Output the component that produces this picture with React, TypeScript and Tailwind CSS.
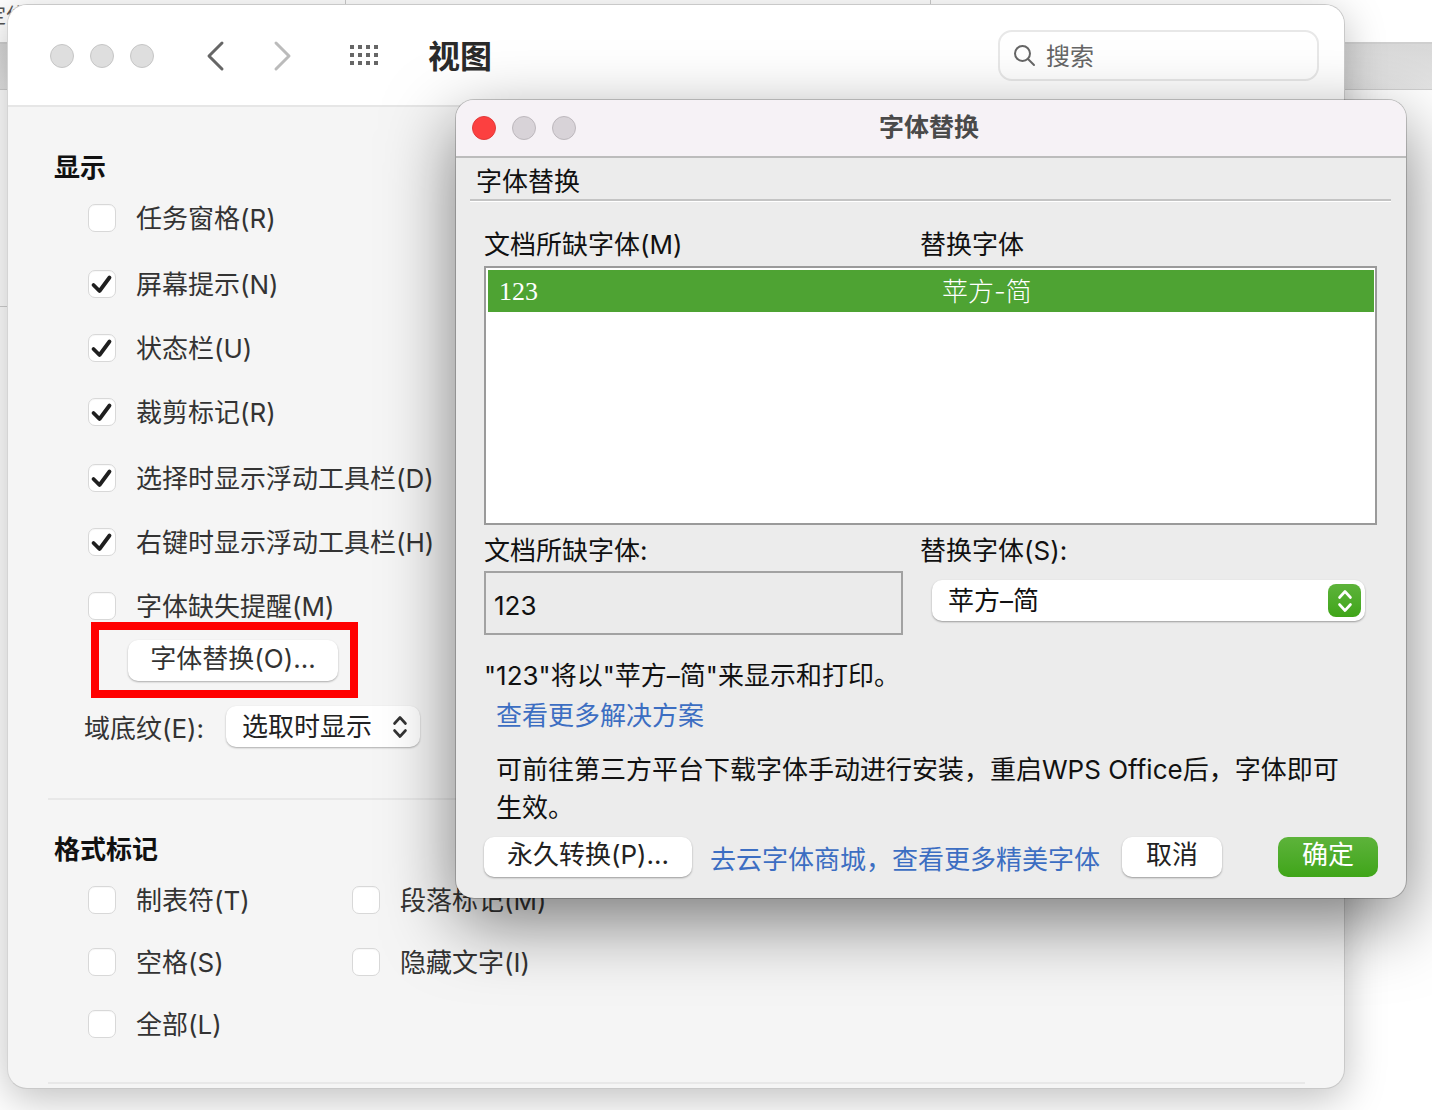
const font = "font-['Inter','Noto_Sans_CJK_SC','Liberation_Sans',sans-serif]"

function Checkbox({ checked }: { checked?: boolean }) {
  return (
    <div className="flex items-center justify-center w-[28px] h-[28px] mt-[2px] shrink-0 rounded-[7px] bg-white border border-[#d8d8d8] shadow-[inset_0_1px_1px_rgba(0,0,0,0.03)]">
      {checked && (
        <svg width="26" height="26" viewBox="0 0 26 26" fill="none" stroke="#1f1f1f" strokeWidth="3.8" strokeLinecap="round" strokeLinejoin="round">
          <path d="M4.5 14 10.5 20 20.5 6.5" />
        </svg>
      )}
    </div>
  )
}

function Option({ label, checked, className }: { label: string; checked?: boolean; className?: string }) {
  return (
    <div className={`flex items-center h-[28px] ${className || ''}`}>
      <Checkbox checked={checked} />
      <span className="ml-[20px] mt-[4px] text-[26px] leading-[28px] text-[#333] whitespace-nowrap">{label}</span>
    </div>
  )
}

function Updown({ className }: { className?: string }) {
  return (
    <svg width="16" height="26" viewBox="0 0 16 26" fill="none" stroke="currentColor" strokeWidth="2.6" strokeLinecap="round" strokeLinejoin="round" className={className}>
      <path d="M2.5 9.5 8 3.5l5.5 6" />
      <path d="M2.5 16.5 8 22.5l5.5-6" />
    </svg>
  )
}

function Dots() {
  return (
    <div className="grid grid-cols-4 gap-x-[4px] gap-y-[4px] ml-[58px]">
      {Array.from({ length: 12 }).map((_, i) => (
        <div key={i} className="w-[4px] h-[4px] bg-[#666]" />
      ))}
    </div>
  )
}

function MainWindow() {
  return (
    <div className="absolute left-[7px] top-[4px] w-[1338px] h-[1085px] rounded-[20px] overflow-hidden bg-[#f5f5f5] border border-[#c9c9c9] border-l-[#d4d4d4] shadow-[0_10px_40px_rgba(0,0,0,0.25)]">
      <div className="flex items-center h-[102px] bg-white border-b-2 border-[#e6e6e6] pl-[42px]">
        <div className="flex gap-[16px] mt-[2px]">
          <div className="w-[24px] h-[24px] rounded-full bg-[#dedede] border border-[#c6c6c6]" />
          <div className="w-[24px] h-[24px] rounded-full bg-[#dedede] border border-[#c6c6c6]" />
          <div className="w-[24px] h-[24px] rounded-full bg-[#dedede] border border-[#c6c6c6]" />
        </div>
        <svg width="20" height="32" viewBox="0 0 20 32" fill="none" strokeWidth="3" strokeLinecap="round" strokeLinejoin="round" className="ml-[52px] mt-[2px] stroke-[#666]">
          <path d="M16 3 3 16l13 13" />
        </svg>
        <svg width="20" height="32" viewBox="0 0 20 32" fill="none" strokeWidth="3" strokeLinecap="round" strokeLinejoin="round" className="ml-[46px] mt-[2px] stroke-[#bbb]">
          <path d="M4 3l13 13L4 29" />
        </svg>
        <Dots />
        <div className="ml-[50px] pt-[4px] text-[32px] leading-[40px] font-bold text-[#2b2b2b]">视图</div>
        <div className="flex items-center ml-[506px] w-[321px] h-[51px] rounded-[14px] border-2 border-[#e8e8e8] bg-white pl-[12px]">
          <svg width="24" height="24" viewBox="0 0 24 24" fill="none" stroke="#666" strokeWidth="2" strokeLinecap="round">
            <circle cx="10.5" cy="10.5" r="7.5" />
            <path d="m16 16 6 6" />
          </svg>
          <span className="ml-[10px] pt-[4px] text-[24px] leading-[30px] text-[#666]">搜索</span>
        </div>
      </div>

      <div className="pt-[46px]">
        <div className="ml-[46px] text-[26px] leading-[30px] font-bold text-[#111]">显示</div>
        <div className="pl-[80px] pt-[20px]">
          <Option label="任务窗格(R)" />
          <Option label="屏幕提示(N)" checked className="mt-[38px]" />
          <Option label="状态栏(U)" checked className="mt-[36px]" />
          <Option label="裁剪标记(R)" checked className="mt-[36px]" />
          <Option label="选择时显示浮动工具栏(D)" checked className="mt-[38px]" />
          <Option label="右键时显示浮动工具栏(H)" checked className="mt-[36px]" />
          <Option label="字体缺失提醒(M)" className="mt-[36px]" />
        </div>
        <div className="flex items-center ml-[83px] mt-[3px] w-[267px] h-[76px] border-[8px] border-[#ff0000] pl-[29px]">
          <div className="flex items-center justify-center w-[210px] h-[41px] pb-[4px] rounded-[10px] bg-white text-[26px] text-[#333] shadow-[0_1px_2px_rgba(0,0,0,0.3)]">
            字体替换(O)...
          </div>
        </div>
        <div className="flex items-center ml-[76px] mt-[8px] h-[41px]">
          <span className="pt-[4px] text-[26px] leading-[30px] text-[#333]">域底纹(E):</span>
          <div className="flex items-center justify-between ml-[22px] w-[194px] h-[41px] rounded-[10px] bg-white pl-[16px] pr-[12px] text-[26px] text-[#222] shadow-[0_1px_2px_rgba(0,0,0,0.3)]">
            选取时显示
            <Updown className="text-[#333]" />
          </div>
        </div>
        <div className="ml-[40px] mr-[39px] mt-[51px] h-[2px] bg-[#e8e8e8]" />
        <div className="ml-[46px] mt-[35px] text-[26px] leading-[30px] font-bold text-[#111]">格式标记</div>
        <div className="pl-[80px] pt-[20px]">
          <div className="flex gap-[236px]">
            <div className="w-[28px]"><Option label="制表符(T)" /></div>
            <Option label="段落标记(M)" />
          </div>
          <div className="flex gap-[236px] mt-[34px]">
            <div className="w-[28px]"><Option label="空格(S)" /></div>
            <Option label="隐藏文字(I)" />
          </div>
          <Option label="全部(L)" className="mt-[34px]" />
        </div>
        <div className="ml-[40px] w-[1257px] mt-[45px] h-[2px] bg-[#e8e8e8]" />
      </div>
    </div>
  )
}

function FontDialog() {
  return (
    <div className="absolute left-[456px] top-[100px] w-[950px] h-[798px] rounded-[18px] overflow-hidden bg-[#ececec] ring-1 ring-black/20 shadow-[0_24px_70px_rgba(0,0,0,0.5)]">
      <div className="relative flex items-center h-[58px] bg-[#f6f2f6] border-b-2 border-[#bcbcbc] pl-[16px] gap-[16px]">
        <div className="w-[24px] h-[24px] rounded-full bg-[#fc4040] border border-[#e03a3a]" />
        <div className="w-[24px] h-[24px] rounded-full bg-[#d8d3d8] border border-[#bdb8bd]" />
        <div className="w-[24px] h-[24px] rounded-full bg-[#d8d3d8] border border-[#bdb8bd]" />
        <div className="absolute left-0 right-[4px] bottom-[13px] text-center text-[25px] leading-[32px] font-bold text-[#4a4a4a]">字体替换</div>
      </div>

      <div className="ml-[20px] mt-[8px] text-[26px] leading-[32px] text-[#111]">字体替换</div>
      <div className="ml-[14px] w-[921px] mt-[1px] h-[2px] bg-[#c4c4c4]" />
      <div className="ml-[14px] w-[921px] h-[1px] bg-white" />

      <div className="flex ml-[28px] mt-[27px] text-[26px] leading-[32px] text-[#111]">
        <div className="w-[436px]">文档所缺字体(M)</div>
        <div>替换字体</div>
      </div>

      <div className="ml-[28px] mt-[5px] w-[893px] h-[259px] border-2 border-[#9a9a9a] bg-white px-[2px] pt-[2px]">
        <div className="flex items-center w-[886px] h-[42px] bg-[#4ea333] text-white text-[26px]">
          <span className="ml-[11px] w-[443px] font-['Liberation_Serif',serif]">123</span>
          <span className="font-light">苹方-简</span>
        </div>
      </div>

      <div className="flex ml-[28px] mt-[10px] text-[26px] leading-[32px] text-[#111]">
        <div className="w-[436px]">文档所缺字体:</div>
        <div>替换字体(S):</div>
      </div>

      <div className="flex ml-[28px] mt-[4px]">
        <div className="flex items-center w-[419px] h-[64px] border-2 border-[#a2a2a2] bg-[#ebebeb] pl-[8px] pt-[4px] text-[26px] text-[#111]">123</div>
        <div className="flex items-center justify-between ml-[29px] mt-[9px] w-[433px] h-[41px] rounded-[10px] bg-white pl-[16px] pr-[4px] text-[26px] text-[#111] shadow-[0_1px_2px_rgba(0,0,0,0.35)]">
          <span>苹方–简</span>
          <div className="flex items-center justify-center w-[33px] h-[33px] rounded-[8px] bg-gradient-to-b from-[#5db33a] to-[#3fa517]">
            <Updown className="text-white" />
          </div>
        </div>
      </div>

      <div className="ml-[28px] mt-[24px] text-[26px] leading-[34px] text-[#111]">"123"将以"苹方–简"来显示和打印。</div>
      <div className="ml-[40px] mt-[6px] text-[26px] leading-[34px] text-[#3c6ec2]">查看更多解决方案</div>
      <div className="ml-[40px] mt-[18px] text-[26px] leading-[38px] text-[#111] whitespace-nowrap">
        可前往第三方平台下载字体手动进行安装，重启WPS Office后，字体即可
        <br />
        生效。
      </div>

      <div className="flex items-center ml-[28px] mt-[10px] h-[40px]">
        <div className="flex items-center justify-center w-[208px] h-[40px] pb-[6px] rounded-[10px] bg-white text-[26px] text-[#222] shadow-[0_1px_2px_rgba(0,0,0,0.35)]">永久转换(P)...</div>
        <div className="ml-[18px] w-[390px] pt-[6px] text-[26px] leading-[34px] text-[#3c6ec2] whitespace-nowrap">去云字体商城，查看更多精美字体</div>
        <div className="flex items-center justify-center ml-[22px] w-[100px] h-[40px] pb-[6px] rounded-[10px] bg-white text-[26px] text-[#222] shadow-[0_1px_2px_rgba(0,0,0,0.35)]">取消</div>
        <div className="flex items-center justify-center ml-[56px] w-[100px] h-[40px] pb-[6px] rounded-[10px] bg-gradient-to-b from-[#5db33a] to-[#3fa517] text-[26px] text-white">确定</div>
      </div>
    </div>
  )
}

export default function App() {
  return (
    <div className={`relative w-[1432px] h-[1110px] overflow-hidden bg-white ${font}`}>
      {/* window behind */}
      <div className="absolute left-0 right-0 top-[42px] h-[48px] bg-gradient-to-b from-[#d8d8d8] to-[#e4e4e4] border-t-2 border-b border-[#cfcfcf]" />
      <div className="absolute left-[345px] top-0 w-[1px] h-[4px] bg-[#ccc]" />
      <div className="absolute left-[930px] top-0 w-[1px] h-[4px] bg-[#ccc]" />
      <div className="absolute left-[-14px] top-[4px] text-[20px] leading-[24px] text-[#555]">定位</div>
      <div className="absolute left-0 top-[306px] w-[8px] h-[1px] bg-[#d0d0d0]" />
      <MainWindow />
      <FontDialog />
    </div>
  )
}
